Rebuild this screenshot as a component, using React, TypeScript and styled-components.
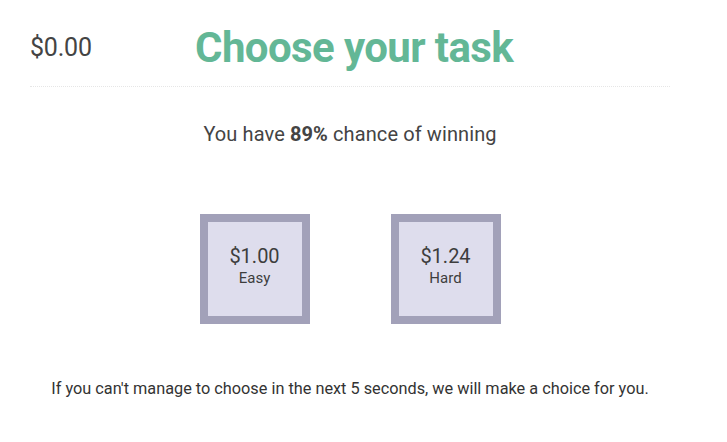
import React from 'react';
import styled, { createGlobalStyle } from 'styled-components';

const GlobalStyle = createGlobalStyle`
  body {
    margin: 0;
    background: #ffffff;
    font-family: Roboto, 'Liberation Sans', sans-serif;
    color: #3a3a3a;
  }
`;

const Page = styled.div`
  width: 640px;
  margin-left: 30px;
  padding-top: 23px;
`;

const Header = styled.div`
  display: flex;
  align-items: center;
  padding-bottom: 14px;
  border-bottom: 1px dotted #e6e6e6;
`;

const Balance = styled.div`
  width: 165px;
  font-size: 25px;
  letter-spacing: -0.2px;
  color: #444;
`;

const Title = styled.h1`
  margin: 0;
  font-size: 42px;
  font-weight: 700;
  letter-spacing: -0.6px;
  color: #63b796;
`;

const Chance = styled.p`
  margin: 35px 0 0;
  text-align: center;
  font-size: 20px;
  letter-spacing: 0.1px;
  color: #444;
`;

const Options = styled.div`
  display: flex;
  justify-content: center;
  gap: 81px;
  margin-top: 68px;
`;

const Option = styled.button`
  width: 110px;
  height: 110px;
  box-sizing: border-box;
  border: 8px solid #a2a1b9;
  background: #dedded;
  display: flex;
  flex-direction: column;
  align-items: center;
  justify-content: center;
  padding: 0 0 8px;
  font-family: Roboto, 'Liberation Sans', sans-serif;
  color: #3d3d3d;
  cursor: pointer;
`;

const Price = styled.span`
  font-size: 20px;
  line-height: 26px;
`;

const Level = styled.span`
  font-size: 15px;
  line-height: 19px;
`;

const Note = styled.p`
  margin: 55px 0 0;
  text-align: center;
  font-size: 16.3px;
  color: #333;
`;

const tasks = [
  { price: '$1.00', level: 'Easy' },
  { price: '$1.24', level: 'Hard' },
];

export default function App() {
  return (
    <>
      <GlobalStyle />
      <Page>
        <Header>
          <Balance>$0.00</Balance>
          <Title>Choose your task</Title>
        </Header>
        <Chance>
          You have <b>89%</b> chance of winning
        </Chance>
        <Options>
          {tasks.map((t) => (
            <Option key={t.level}>
              <Price>{t.price}</Price>
              <Level>{t.level}</Level>
            </Option>
          ))}
        </Options>
        <Note>If you can't manage to choose in the next 5 seconds, we will make a choice for you.</Note>
      </Page>
    </>
  );
}
